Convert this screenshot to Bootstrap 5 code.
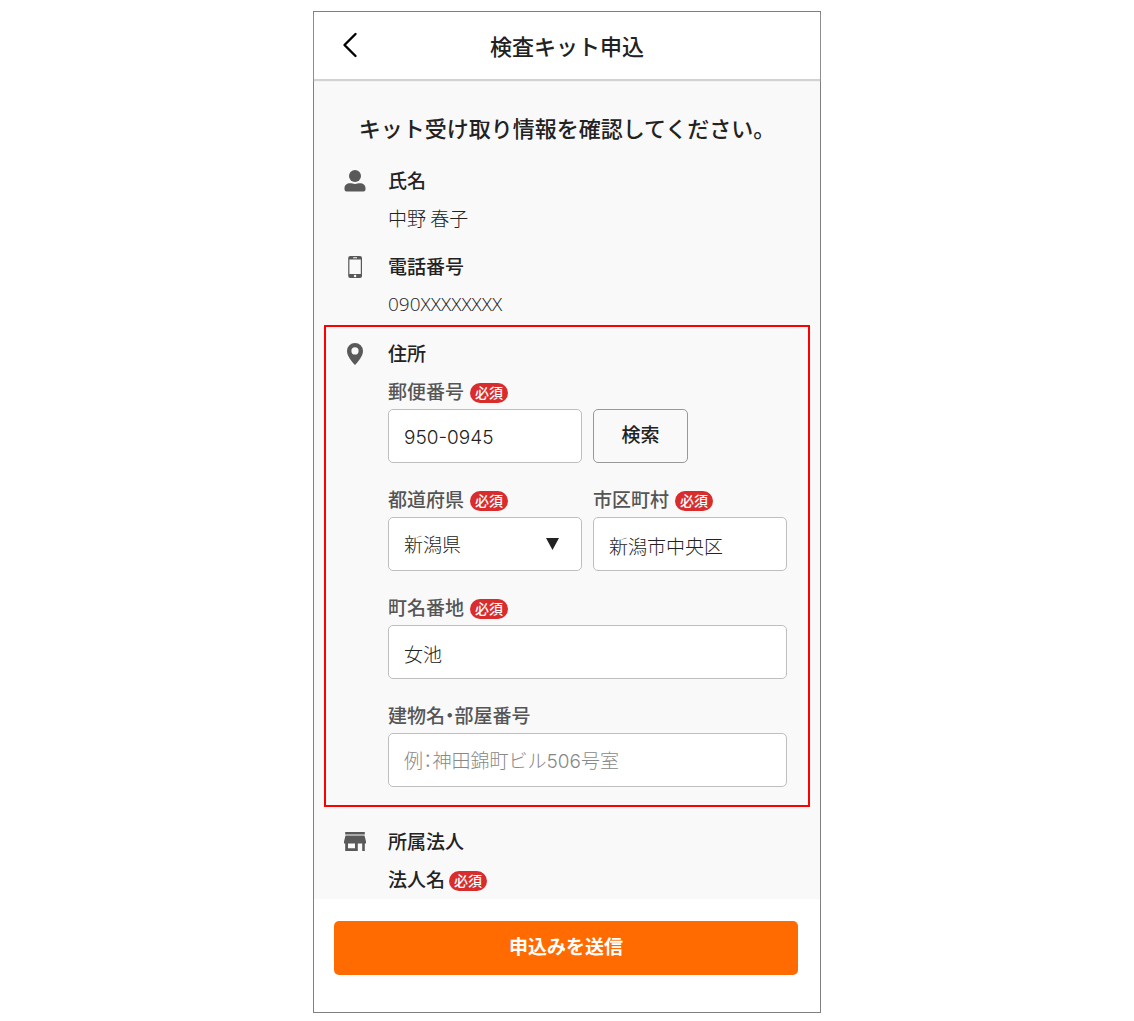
<!DOCTYPE html>
<html lang="ja">
<head>
<meta charset="utf-8">
<meta name="viewport" content="width=device-width, initial-scale=1">
<title>検査キット申込</title>
<link href="https://cdn.jsdelivr.net/npm/bootstrap@5.3.0/dist/css/bootstrap.min.css" rel="stylesheet">
<style>
  body { font-family: "Noto Sans CJK JP", sans-serif; color: #222; background: #fff; font-size: 19px; line-height: 38px; }
  .phone { max-width: 508px; border: 1px solid #808080; margin-top: 11px; }
  .topbar { display: grid; grid-template-columns: 60px 1fr 60px; align-items: center; height: 67px; padding-bottom: 1px; background: #fff; box-shadow: 0 2px 1px #d2d2d2; position: relative; }
  .topbar h1 { font-size: 22px; line-height: 38px; font-weight: 500; }
  .back-link { padding-left: 24px; line-height: 0; }
  .content-area { background: #f9f9f9; padding: 29px 0 1px; }
  .intro { font-size: 22px; line-height: 38px; font-weight: 500; margin: 0 0 15px; }
  .info { display: grid; grid-template-columns: 22px 1fr; column-gap: 22px; padding: 0 33px 0 30px; margin-bottom: 10px; }
  .info > svg { margin-top: 9px; fill: #595959; }
  .info h3, .company-label { font-size: 19px; line-height: 38px; font-weight: 500; margin: 0; color: #222; }
  .info p { margin: 0; font-weight: 300; }
  .tel { font-family: "Open Sans", "Noto Sans", sans-serif; }
  .marked { border: 2px solid #f00; margin: -8px 10px 15px; padding: 7px 0 18px; }
  .marked .info { padding: 0 21px 0 18px; margin: 0; }
  .fields { display: grid; grid-template-columns: 1fr 1fr; column-gap: 11px; row-gap: 22px; margin-top: 5px; }
  .wide { grid-column: 1 / -1; }
  .field-label { display: flex; align-items: center; gap: 6px; margin-bottom: 4px; font-weight: 500; line-height: 28px; color: #555; font-feature-settings: "halt"; }
  .required { background: #d92c2c; color: #fff; border-radius: 10px; font-size: 14px; line-height: 18px; font-weight: 500; padding: 0 5px 2px; margin-top: 3px; }
  .box.form-control, .box.form-select { height: 54px; padding: 2px 15px 0; border: 1px solid #bfbfbf; border-radius: 5px; font-family: Inter, "Noto Sans CJK JP", sans-serif; font-size: 19px; line-height: 28px; font-weight: 300; color: #222; background: #fff; font-feature-settings: "halt"; }
  .box.form-select { padding-top: 4px; }
  .box::placeholder { color: #888; }
  .arrow { position: absolute; right: 23px; top: 21px; pointer-events: none; }
  .search-btn { width: 95px; height: 54px; border: 1px solid #999; border-radius: 5px; font-size: 19px; line-height: 28px; font-weight: 500; color: #222; padding: 0 0 4px; }
  .bottom-bar { background: #fff; padding: 22px 22px 37px 20px; }
  .send-btn { height: 54px; background: #ff6b00; color: #fff; border: 0; border-radius: 5px; font-size: 19px; line-height: 28px; font-weight: 700; padding: 0 0 4px; }
</style>
</head>
<body>
<div class="phone mx-auto">
  <header class="topbar">
    <a href="#" class="back-link" aria-label="戻る"><svg width="24" height="28" viewBox="0 0 24 28" fill="none" stroke="#000" stroke-width="2.4" stroke-linecap="round" stroke-linejoin="round"><path d="M17.5 3 L6.5 14 L17.5 25"/></svg></a>
    <h1 class="text-center mb-0">検査キット申込</h1>
  </header>
  <form>
    <main class="content-area">
      <h2 class="intro text-center">キット受け取り情報を確認してください。</h2>
      <section class="info">
        <svg width="22" height="22" viewBox="0 0 22 22" aria-hidden="true"><circle cx="11" cy="6" r="6"/><path d="M0.5 19.5V18C0.5 15 3 13.3 6 13.3C8 13.3 9 14 11 14S14 13.3 16 13.3C19 13.3 21.5 15 21.5 18V19.5Q21.5 21.5 19.5 21.5H2.5Q.5 21.5 .5 19.5Z"/></svg>
        <div><h3>氏名</h3><p>中野 春子</p></div>
      </section>
      <section class="info">
        <svg width="22" height="22" viewBox="0 0 22 22" aria-hidden="true"><path fill-rule="evenodd" d="M6.2 0H16Q18 0 18 2V20Q18 22 16 22H6.200Q4.200 22 4.200 20V2Q4.200 0 6.200 0ZM5.400 3.500V18H16.800V3.500ZM9.200 1.300V2.200H13V1.300ZM11.100 18.800A1.200 1.200 0 1 0 11.100 21.200A1.200 1.200 0 1 0 11.100 18.800Z"/></svg>
        <div><h3>電話番号</h3><p class="tel">090XXXXXXXX</p></div>
      </section>
      <section class="marked">
        <div class="info">
          <svg width="22" height="22" viewBox="0 0 22 22" aria-hidden="true"><path fill-rule="evenodd" d="M11 0A8 8 0 0 0 3 8C3 13 8 19 11 22C14 19 19 13 19 8A8 8 0 0 0 11 0ZM11 4.300A3.600 3.600 0 1 1 11 11.500A3.600 3.600 0 1 1 11 4.300Z"/></svg>
          <div>
            <h3>住所</h3>
            <div class="fields">
              <div>
                <label class="field-label" for="zip">郵便番号<span class="required">必須</span></label>
                <input class="box form-control" id="zip" type="text" value="950-0945">
              </div>
              <div class="d-flex align-items-end"><button type="button" class="btn search-btn">検索</button></div>
              <div>
                <label class="field-label" for="pref">都道府県<span class="required">必須</span></label>
                <div class="position-relative">
                  <select class="box form-select" id="pref"><option selected>新潟県</option></select>
                  <svg class="arrow" width="13" height="12" viewBox="0 0 13 12" aria-hidden="true"><path fill="#222" d="M0 0H13L6.500 12Z"/></svg>
                </div>
              </div>
              <div>
                <label class="field-label" for="city">市区町村<span class="required">必須</span></label>
                <input class="box form-control" id="city" type="text" value="新潟市中央区">
              </div>
              <div class="wide">
                <label class="field-label" for="street">町名番地<span class="required">必須</span></label>
                <input class="box form-control" id="street" type="text" value="女池">
              </div>
              <div class="wide">
                <label class="field-label" for="building">建物名・部屋番号</label>
                <input class="box form-control" id="building" type="text" placeholder="例：神田錦町ビル506号室">
              </div>
            </div>
          </div>
        </div>
      </section>
      <section class="info mb-0">
        <svg width="22" height="22" viewBox="0 0 22 22" aria-hidden="true"><path fill-rule="evenodd" d="M1.200 1H20.800V3.500H1.200ZM1.500 4.500H20.500L22 10.500V12.500H20.800V20H18.200V12.500H13.800V20H1.200V12.500H0V10.500ZM4 12.500V17.300H11V12.500Z"/></svg>
        <div>
          <h3>所属法人</h3>
          <div class="d-flex align-items-center gap-1 company-label">法人名<span class="required">必須</span></div>
        </div>
      </section>
    </main>
    <footer class="bottom-bar"><button type="submit" class="btn send-btn w-100">申込みを送信</button></footer>
  </form>
</div>
<script src="https://cdn.jsdelivr.net/npm/bootstrap@5.3.0/dist/js/bootstrap.bundle.min.js"></script>
</body>
</html>
